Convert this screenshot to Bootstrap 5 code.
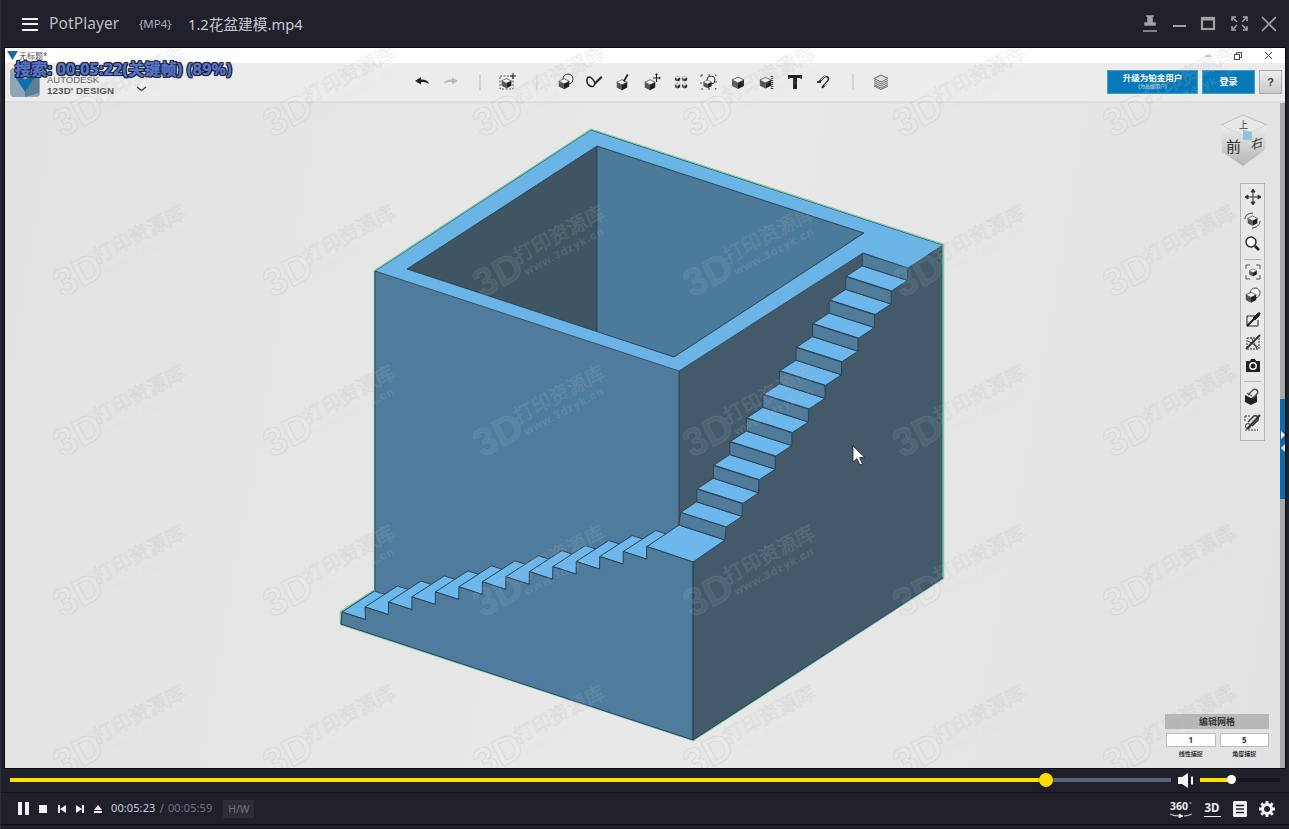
<!DOCTYPE html>
<html lang="zh">
<head>
<meta charset="utf-8">
<title>PotPlayer</title>
<link href="https://cdn.jsdelivr.net/npm/bootstrap@5.3.0/dist/css/bootstrap.min.css" rel="stylesheet">
<style>
html,body{margin:0;height:100%;overflow:hidden;background:#1f2029}
body{font-family:"Noto Sans","Noto Sans CJK SC",sans-serif}
.pp-shell{width:1289px;height:829px;background:#1f2029;border-left:1px solid #2c2d35}
.pp-head{height:48px;color:#b9bdc5}
.pp-burger{width:16px;height:13px;margin-left:21px;margin-right:11px;border-top:2px solid #f2f2f2;border-bottom:2px solid #f2f2f2;position:relative}
.pp-burger::after{content:"";position:absolute;left:0;right:0;top:3.5px;height:2px;background:#f2f2f2}
.pp-brand{font-size:15.5px;width:90px;letter-spacing:.1px}
.pp-fmt{font-size:11.5px;width:49px;color:#a8b0c0}
.pp-file{font-size:14.7px;color:#c3c9d4}
.pp-winbtns{margin-left:auto;margin-right:10px;gap:0}
.pp-winbtns svg{display:block}
.pp-video{height:720px;margin-left:4px;width:1280px;position:relative;background:#e4e4e4;overflow:hidden;outline:1px solid #0c0c10}
.app-title{height:15px;background:#fff;position:relative;font-size:8px;color:#555;line-height:15px;padding-left:2px}
.app-title span{margin-left:1px}
.app-winbtns{margin-left:auto;margin-right:12px;gap:22px}
.app-tools{height:40px;background:#ececec;border-bottom:2px solid #dcdcdc}
.app-logo{width:30px;height:29px;margin-left:5px;margin-right:7px;flex:none}
.app-brand{width:90px;line-height:11px;font-size:9.5px;color:#555;font-weight:700;font-family:"Liberation Sans",sans-serif;padding-top:5px;position:relative}
.app-brand b{display:block;font-size:9.8px;letter-spacing:.1px}
.app-brand i{display:block;font-style:normal;font-weight:400;color:#666}
.app-chev{position:absolute;left:89px;top:17px}
.app-iconrow{margin-left:271px;width:680px}
.app-ic{width:28.7px;height:20px;display:flex;justify-content:center;align-items:center;flex:none;position:relative}
.app-ic svg{display:block}
.app-upsell{width:91px;height:24px;background:#0a79b8;color:#fff;text-align:center;font-size:8.5px;font-weight:700;line-height:11px;padding-top:1px;border:1px solid #3d9ed2}
.app-upsell small{display:block;font-size:5px;line-height:7px;font-weight:400;color:#cfe6f4}
.app-login{width:53px;height:24px;background:#0a79b8;color:#fff;text-align:center;font-size:9px;font-weight:700;line-height:22px;margin-left:4px;border:1px solid #3d9ed2}
.app-help{width:23px;height:24px;margin-left:4px;margin-right:3px;border:1px solid #aaa;background:linear-gradient(#eee,#c9c9c9);text-align:center;font-size:11px;line-height:22px;color:#444;font-weight:700;font-family:"Liberation Sans",sans-serif}
.app-canvas{height:665px;position:relative;background:linear-gradient(100deg,#e2e2e2,#e8e8e8 50%,#e2e2e2)}
.model-svg{position:absolute;inset:0;width:1280px;height:665px}
.mark-svg{position:absolute;inset:0;width:1280px;height:720px;pointer-events:none}
.app-rail{position:absolute;left:1235px;top:80px;width:25px;height:258px;border:1.5px solid #b4b4b4;background:#e8e8e8;padding-top:1px}
.rail-ic{height:23.5px;display:flex;justify-content:center;align-items:center}
.rail-last{margin-top:3px}
.rail-sep{height:1px;width:17px;margin:3px auto .5px;background:#bbb}
.rail-sep2{margin:3px auto}
.app-scroll{position:absolute;right:0;top:0;bottom:0;width:5px;background:#a9a9a9}
.app-scroll::after{content:"";position:absolute;left:0;right:0;top:296px;height:100px;background:#0b6bb0}
.scroll-tip{position:absolute;width:0;height:0;border-top:4px solid transparent;border-bottom:4px solid transparent;z-index:2}
.grid-panel{position:absolute;left:1160px;top:611px;width:104px;font-size:7px;color:#333;text-align:center}
.grid-head{height:15px;background:#b7b7b7;font-size:9px;font-weight:700;line-height:15px;color:#333}
.grid-cells{gap:4px;margin:4px 0 0 1px}
.grid-cell{width:49.5px;height:14px;background:#fff;border:1px solid #bcbcbc;font-size:8px;line-height:12px;font-weight:700}
.grid-labs{gap:4px;margin:3px 0 0 1px;line-height:9px;font-size:6px;font-weight:700}
.grid-labs div{width:49.5px}
.osd{position:absolute;left:10px;top:11px;font-size:16px;line-height:20px;font-weight:700;color:#5675c9;-webkit-text-stroke:.4px #5675c9;text-shadow:-1px -1px 0 #14182a,1px -1px 0 #14182a,-1px 1px 0 #14182a,1px 1px 0 #14182a,0 1px 1px #14182a,0 -1px 1px #14182a,1px 0 1px #14182a,-1px 0 1px #14182a;white-space:nowrap;letter-spacing:.25px}
.pp-seek{height:25px;position:relative;border-bottom:1px solid #111217;padding-left:9px}
.seek-track{width:1161px;height:4px;background:#5f6478;position:relative;margin-top:-1px}
.seek-fill{height:100%;background:#ffe000}
.seek-knob{position:absolute;left:1029px;top:-5px;width:14px;height:14px;border-radius:50%;background:#ffdd00;box-shadow:0 1px 2px rgba(0,0,0,.5)}
.vol-ic{margin-left:7px;margin-right:6px;flex:none}
.vol-track{width:80px;height:4px;background:#16171e;position:relative;margin-top:-1px}
.vol-fill{height:100%;width:31px;background:#ffe000}
.vol-knob{position:absolute;left:27px;top:-2.5px;width:9px;height:9px;border-radius:50%;background:#fff}
.pp-ctrl{height:32px;padding-left:17px;border-bottom:1px solid #0d0d11}
.pp-ctrl svg{display:block;flex:none}
.ctl-stop{margin-left:10px}
.ctl-prev{margin-left:11px}
.ctl-next{margin-left:10px}
.ctl-eject{margin-left:10px}
.t-now{font-size:11px;color:#c3d0e4;margin-left:9px;letter-spacing:.1px}
.t-sep{font-size:12px;color:#6f7586;margin:0 4px}
.t-all{font-size:11px;color:#6f7586;letter-spacing:.1px}
.hw-chip{width:31px;height:18px;margin-left:11px;background:#2c2d36;color:#6e7282;font-size:10.5px;text-align:center;line-height:18px}
.ctrl-right{margin-left:auto;margin-right:14px}
.ctl-3d,.ctl-list{margin-left:11px}
.ctl-gear{margin-left:12px}
</style>
</head>
<body>
<svg width="0" height="0" class="position-absolute">
  <defs>
    <symbol id="cb" viewBox="0 0 16 16">
      <polygon points="8,3 14,6 8,9 2,6" fill="#f2f2f2" stroke="#222" stroke-width=".7"/>
      <polygon points="2,6 8,9 8,15 2,12" fill="#555"/>
      <polygon points="8,9 14,6 14,12 8,15" fill="#1f1f1f"/>
    </symbol>
  </defs>
</svg>
<div class="pp-shell d-flex flex-column">
  <header class="pp-head d-flex align-items-center">
    <div class="pp-burger"></div>
    <div class="pp-brand">PotPlayer</div>
    <div class="pp-fmt">{MP4}</div>
    <div class="pp-file">1.2花盆建模.mp4</div>
    <svg class="pp-winbtns" width="136" height="20" viewBox="0 0 136 20" fill="none" stroke="#a3a3a3" stroke-width="2">
      <path d="M3 2h8M5 2h4v7h3v2H2V9h3zM0 17h14" fill="#a3a3a3" stroke-width="1.5"/>
      <path d="M30 12h13"/>
      <rect x="59" y="4" width="12" height="11" stroke-width="2.2"/><path d="M58 5h14" stroke-width="3"/>
      <path d="M89 7V3h4M100 3h4v4M89 12v4h4M100 16h4v-4M90 4l4 4M103 4l-4 4M90 15l4-4M103 15l-4-4" stroke-width="1.5"/>
      <path d="M119 3l14 14M133 3l-14 14" stroke-width="1.7"/>
    </svg>
  </header>

  <main class="pp-video">
    <div class="app-title d-flex align-items-center">
      <svg width="11" height="9" viewBox="0 0 11 9"><polygon points="0,0 11,0 5.5,9" fill="#176aa8"/></svg>
      <span>无标题*</span>
      <div class="app-winbtns d-flex align-items-center">
        <svg width="8" height="8" viewBox="0 0 8 8"><path d="M1 4h6" stroke="#999"/></svg>
        <svg width="8" height="8" viewBox="0 0 8 8" fill="none" stroke="#444"><rect x=".5" y="2.5" width="5" height="5"/><path d="M2.5 2.500V.5h5v5h-2"/></svg>
        <svg width="9" height="9" viewBox="0 0 9 9"><path d="M1 1l7 7M8 1l-7 7" stroke="#444"/></svg>
      </div>
    </div>
    <div class="app-tools d-flex align-items-center">
      <svg class="app-logo" viewBox="0 0 30 29">
        <rect width="30" height="29" rx="4" fill="#8fa6b4"/>
        <polygon points="15,3 29,7 29,25 15,29" fill="#5b7f95"/>
        <polygon points="4,7 26,7 15,24" fill="#0f6fae"/>
        <polygon points="4,7 15,11 26,7 15,3" fill="#b4c4cc"/>
      </svg>
      <div class="app-brand">
        <i>AUTODESK</i><b>123D' DESIGN</b>
        <svg class="app-chev" width="11" height="6" viewBox="0 0 11 6"><path d="M1 1l4.500 3.500L10 1" fill="none" stroke="#444" stroke-width="1.500"/></svg>
      </div>
      <div class="app-iconrow d-flex align-items-center">
        <div class="app-ic"><svg width="16" height="12" viewBox="0 0 16 12"><path d="M1 5l6-4v2.500c4 0 7 1 8 4.500-2-1.500-4-2-8-2V8.500z" fill="#222"/></svg></div>
        <div class="app-ic"><svg width="16" height="12" viewBox="0 0 16 12"><path d="M15 5L9 1v2.500c-4 0-7 1-8 4.500 2-1.500 4-2 8-2v2.500z" fill="#bbb"/></svg></div>
        <div class="app-ic"><svg width="2" height="16"><path d="M1 0v16" stroke="#bbb"/></svg></div>
        <div class="app-ic"><svg width="18" height="18" viewBox="0 0 18 18"><rect x="1" y="3" width="13" height="13" fill="none" stroke="#555" stroke-dasharray="2 1.500"/><use href="#cb" x="1" y="3" width="13" height="13"/><path d="M14 0v6M11 3h6" stroke="#222"/></svg></div>
        <div class="app-ic"><svg width="2" height="16"><path d="M1 0v16" stroke="#ccc"/></svg></div>
        <div class="app-ic"><svg width="18" height="18" viewBox="0 0 18 18"><circle cx="11" cy="6" r="5" fill="#f2f2f2" stroke="#333"/><use href="#cb" x="0" y="3" width="14" height="14"/></svg></div>
        <div class="app-ic"><svg width="18" height="16" viewBox="0 0 18 16"><path d="M4 3c-3 0-3 7 1 9s6-2 4-5-3-4-5-4z" fill="none" stroke="#222" stroke-width="1.500"/><path d="M9 9l7-7 1.500 1.500-7 7z" fill="#222"/></svg></div>
        <div class="app-ic"><svg width="18" height="18" viewBox="0 0 18 18"><use href="#cb" x="1" y="4" width="14" height="14"/><path d="M9 8l4-7 1.500 1-4 7z" fill="#222"/></svg></div>
        <div class="app-ic"><svg width="18" height="18" viewBox="0 0 18 18"><use href="#cb" x="0" y="4" width="14" height="14"/><path d="M10 5h7M13.500 1.500V9" stroke="#222"/><path d="M13.500 0l-1.500 2h3zM18 5l-2-1.500v3z" fill="#222"/></svg></div>
        <div class="app-ic"><svg width="14" height="14" viewBox="0 0 14 14"><use href="#cb" x="0" y="0" width="7" height="7"/><use href="#cb" x="7" y="0" width="7" height="7"/><use href="#cb" x="0" y="7" width="7" height="7"/><use href="#cb" x="7" y="7" width="7" height="7"/></svg></div>
        <div class="app-ic"><svg width="18" height="18" viewBox="0 0 18 18"><rect x="1" y="2" width="15" height="14" fill="none" stroke="#444" stroke-dasharray="2 5"/><circle cx="11" cy="7" r="4" fill="#f2f2f2" stroke="#333"/><use href="#cb" x="2" y="5" width="11" height="11"/></svg></div>
        <div class="app-ic"><svg width="16" height="16" viewBox="0 0 16 16"><use href="#cb" width="16" height="16"/></svg></div>
        <div class="app-ic"><svg width="16" height="16" viewBox="0 0 16 16"><use href="#cb" x="-1" y="0" width="15" height="16"/><path d="M13 2v13" stroke="#333" stroke-width="2.500" stroke-dasharray="1 1"/></svg></div>
        <div class="app-ic"><svg width="14" height="14" viewBox="0 0 14 14"><path d="M0 0h14v4h-1l-1-1H9v11H5V3H2L1 4H0z" fill="#222"/></svg></div>
        <div class="app-ic"><svg width="16" height="16" viewBox="0 0 16 16" fill="none"><path d="M3 8l5-5c3-2 6 1 4 4l-5 6" stroke="#333" stroke-width="2"/><path d="M5 6l4-4c4-2 6 2 4 5l-5 5" stroke="#f4f4f4"/><path d="M1 8l4 0M6 14l2-3" stroke="#111" stroke-width="1.500"/></svg></div>
        <div class="app-ic"><svg width="2" height="16"><path d="M1 0v16" stroke="#bbb"/></svg></div>
        <div class="app-ic"><svg width="16" height="16" viewBox="0 0 16 16" fill="none" stroke="#666"><polygon points="8,1 15,4.500 8,8 1,4.500" fill="#ddd"/><path d="M1 6.500l7 3.500 7-3.500M1 8.500l7 3.500 7-3.500M1 10.500l7 3.500 7-3.500M1 12l7 3.500 7-3.500"/></svg></div>
      </div>
      <div class="ms-auto d-flex align-items-center">
        <div class="app-upsell">升级为铂金用户<small>(为高级用户)</small></div>
        <div class="app-login">登录</div>
        <div class="app-help">?</div>
      </div>
    </div>
    <div class="app-canvas">
      <svg class="model-svg" id="model" viewBox="5 103 1280 665"></svg>
      <div class="app-rail">
        <div class="rail-ic"><svg width="16" height="16" viewBox="0 0 16 16" fill="none" stroke="#333"><path d="M8 1v14M1 8h14"/><path d="M8 0L6 3h4zM8 16l-2-3h4zM0 8l3-2v4zM16 8l-3-2v4z" fill="#333"/></svg></div>
        <div class="rail-ic"><svg width="17" height="17" viewBox="0 0 17 17"><use href="#cb" x="2" y="1" width="13" height="14"/><path d="M1 7c0-4 4-6 8-6M16 9c0 4-4 7-8 7" fill="none" stroke="#444"/></svg></div>
        <div class="rail-ic"><svg width="15" height="15" viewBox="0 0 15 15"><circle cx="6" cy="6" r="5" fill="#fff" stroke="#222" stroke-width="1.400"/><path d="M10 10l4 4" stroke="#222" stroke-width="2.500"/></svg></div>
        <div class="rail-sep"></div>
        <div class="rail-ic"><svg width="16" height="16" viewBox="0 0 16 16"><path d="M1 5V1h4M11 1h4v4M1 11v4h4M15 11v4h-4" fill="none" stroke="#555"/><use href="#cb" x="3" y="2" width="10" height="12"/></svg></div>
        <div class="rail-ic"><svg width="17" height="17" viewBox="0 0 17 17"><circle cx="11" cy="6" r="5" fill="#f2f2f2" stroke="#555"/><use href="#cb" x="0" y="2" width="14" height="15"/></svg></div>
        <div class="rail-ic"><svg width="16" height="16" viewBox="0 0 16 16" fill="none" stroke="#222"><path d="M2 5h8M2 5v10h11V9"/><path d="M2 15L15 2" stroke-width="2"/><path d="M8 7l5-5 2 0-1 3-4 4z" fill="#222"/></svg></div>
        <div class="rail-ic"><svg width="16" height="16" viewBox="0 0 16 16" fill="none" stroke="#333"><path d="M2 4h12v11H2z" stroke-dasharray="2 1"/><path d="M1 15L15 1" stroke-width="2"/><path d="M3 7l10 6M6 3l6 12"/></svg></div>
        <div class="rail-ic"><svg width="14" height="13" viewBox="0 0 14 13"><path d="M0 2h4l1-2h4l1 2h4v11H0z" fill="#222"/><circle cx="7" cy="7" r="3.200" fill="none" stroke="#fff" stroke-width="1.400"/></svg></div>
        <div class="rail-sep rail-sep2"></div>
        <div class="rail-ic"><svg width="17" height="17" viewBox="0 0 17 17"><path d="M1 7l6 3 6-3v7l-6 3-6-3z" fill="#222"/><path d="M4 7l5-5c3-2 6 1 4 4l-4 4" fill="none" stroke="#555" stroke-width="1.500"/><path d="M3 5l5 3" stroke="#444"/></svg></div>
        <div class="rail-ic rail-last"><svg width="17" height="17" viewBox="0 0 17 17" fill="none" stroke="#333"><path d="M1 2h5M1 2v5M1 16h13" stroke-dasharray="2 1"/><path d="M3 15L16 1" stroke-width="2"/><path d="M4 8l6-6c3-1 5 1 4 4l-6 6" stroke-width="1.500"/><circle cx="4" cy="12" r="2.500"/></svg></div>
      </div>
      <div class="grid-panel">
        <div class="grid-head">编辑网格</div>
        <div class="grid-cells d-flex"><div class="grid-cell">1</div><div class="grid-cell">5</div></div>
        <div class="grid-labs d-flex"><div>线性捕捉</div><div>角度捕捉</div></div>
      </div>
      <div class="app-scroll"></div>
      <div class="scroll-tip" style="right:0;top:328px;border-left:4px solid #fff"></div>
      <div class="scroll-tip" style="right:0;top:341px;border-right:4px solid #d5e7f4"></div>
    </div>
    <svg class="mark-svg" id="marks" viewBox="5 48 1280 720"></svg>
    <div class="osd">搜索: 00:05:22(关键帧) (89%)</div>
  </main>

  <section class="pp-seek d-flex align-items-center">
    <div class="seek-track"><div class="seek-fill" style="width:1036px"></div><div class="seek-knob"></div></div>
    <svg class="vol-ic" width="16" height="15" viewBox="0 0 16 15"><path d="M0 4h4l6-4v15l-6-4H0z" fill="#f4f4f4"/><path d="M14 3.500v8" stroke="#f4f4f4" stroke-width="2"/></svg>
    <div class="vol-track"><div class="vol-fill"></div><div class="vol-knob"></div></div>
  </section>

  <section class="pp-ctrl d-flex align-items-center">
    <svg width="11" height="13" viewBox="0 0 11 13"><path d="M0 0h4v13H0zM7 0h4v13H7z" fill="#f1f1f4"/></svg>
    <svg class="ctl-stop" width="8" height="8" viewBox="0 0 8 8"><rect width="8" height="8" fill="#f1f1f4"/></svg>
    <svg class="ctl-prev" width="8" height="8" viewBox="0 0 8 8"><path d="M0 0h2v8H0zM8 0v8L2 4z" fill="#f1f1f4"/></svg>
    <svg class="ctl-next" width="8" height="8" viewBox="0 0 8 8"><path d="M8 0H6v8h2zM0 0v8l6-4z" fill="#f1f1f4"/></svg>
    <svg class="ctl-eject" width="8" height="8" viewBox="0 0 8 8"><path d="M4 0l4 5H0zM0 6h8v2H0z" fill="#f1f1f4"/></svg>
    <span class="t-now">00:05:23</span><span class="t-sep">/</span><span class="t-all">00:05:59</span>
    <div class="hw-chip">H/W</div>
    <div class="ctrl-right d-flex align-items-center">
      <svg width="23" height="18" viewBox="0 0 23 18"><text x="0" y="10" font-family="Noto Sans" font-size="10.500" font-weight="700" fill="#eee">360</text><text x="19" y="6" font-size="6" fill="#eee">°</text><path d="M0 14c3 1.500 6 2 9 2M22 14c-3 1.500-6 2-8 2M9 14v4l4-2z" stroke="#eee" fill="#eee" stroke-width=".8"/></svg>
      <svg class="ctl-3d" width="18" height="18" viewBox="0 0 18 18"><text x="0.500" y="12" font-family="Noto Sans" font-size="11.500" font-weight="700" fill="#eee">3D</text><path d="M0 16.500h17" stroke="#eee"/></svg>
      <svg class="ctl-list" width="14" height="16" viewBox="0 0 14 16"><rect width="14" height="16" rx="1.500" fill="#f2f2f2"/><path d="M3 4.500h8M3 8h8M3 11.500h8" stroke="#1f2029" stroke-width="1.500"/></svg>
      <svg class="ctl-gear" width="16" height="16" viewBox="0 0 16 16"><circle cx="8" cy="8" r="4.500" fill="none" stroke="#f2f2f2" stroke-width="3"/><path d="M8 0v3M8 13v3M0 8h3M13 8h3M2.300 2.300l2.100 2.100M11.600 11.600l2.100 2.100M13.700 2.300l-2.100 2.100M4.400 11.600l-2.100 2.100" stroke="#f2f2f2" stroke-width="2.800"/></svg>
    </div>
  </section>
</div>
<script>
(function(){
  var EDGE='#2c4254',TOP='#6ab4e6',TREAD='#6cb7ec',LEFT='#4f7c9d',RIGHT='#435a6b',IN='#3f5564',BACK='#4c7a9a',RISER='#507b9b';
  function p(pts,fill,sw){return '<polygon points="'+pts.map(function(a){return a[0].toFixed(1)+','+a[1].toFixed(1)}).join(' ')+'" fill="'+fill+'" stroke="'+EDGE+'" stroke-width="'+(sw==null?1:sw)+'" stroke-linejoin="round"/>';}
  var s='';
  s+='<defs><linearGradient id="vc" x1="0" y1="0" x2="0" y2="1"><stop offset="0" stop-color="#ededed"/><stop offset="1" stop-color="#b5b5b5"/></linearGradient></defs>';
  s+='<polygon points="375,271 591,130 943,245 943,578 693,740 341,624 341,612 375,590" fill="none" stroke="#7cc9a6" stroke-width="2.500"/>';
  var L=[[342,612]],i;
  for(i=0;i<13;i++)L.push([365+23.47*i,607-5.05*i]);
  var RX=function(q){return [q[0]+23.4,q[1]+7.6]};
  var b=[32.5,-21];
  s+=p([[679,371],[863,253],[908,268],[943,245],[943,578],[693,740],[693,562],[679,525]],RIGHT,0);
  s+=p([[375,271],[679,371],[679,525],[647,560],[375,610]],LEFT,0);
  for(i=0;i<13;i++){var a=L[i],r=RX(a);s+=p([a,r,[r[0]+b[0],r[1]+b[1]],[a[0]+b[0],a[1]+b[1]]],TREAD,1);}
  s+=p([[647,546.500],[679,525],[725,540],[693,562]],TREAD,1);
  var f=[];for(i=0;i<13;i++){f.push(L[i]);f.push(RX(L[i]));}
  f.push(L[13]);f.push([693,562]);f.push([693,740]);f.push([341,624]);
  s+=p(f,LEFT,1);
  var P=[],w=[45.5,14.6],d=[16,-10.5],h=12.8;
  for(i=0;i<12;i++)P.push([680.7+16.55*i,512.3-23.6*i]);
  s+=p([[679,525],[725,540],[726,527],[680.700,512.300]],RISER,1);
  for(i=0;i<11;i++){
    var q=P[i],qr=[q[0]+w[0],q[1]+w[1]],qd=[q[0]+d[0],q[1]+d[1]],qrd=[qr[0]+d[0],qr[1]+d[1]];
    s+=p([q,qr,qrd,qd],TREAD,1);
    s+=p([qd,qrd,[qrd[0],qrd[1]-h],[qd[0],qd[1]-h]],RISER,1);
  }
  s+=p([[407,269],[597,146],[597,332]],IN,.8);
  s+=p([[597,146],[864,233],[674,357],[597,332]],BACK,.8);
  s+='<path d="M375 271L591 130L943 245L908 268L863 253L679 371ZM407 269L674 357L864 233L597 146Z" fill="'+TOP+'" fill-rule="evenodd" stroke="'+EDGE+'" stroke-width=".9" stroke-linejoin="round"/>';
  s+='<path d="M375 271V590M679 371V525M693 562V740M693 740L943 578" stroke="'+EDGE+'" stroke-width="1" fill="none"/>';
  s+='<path d="M375 271L591 130L943 245V578" stroke="#7cc9a6" stroke-width="1.200" fill="none" transform="translate(0,-.8)"/>';
  s+='<path d="M853 446v16l4-3.500 3 6.500 2.500-1-3-6.300 5-.5z" fill="#fff" stroke="#1b1b1b" stroke-width=".8"/>';
  s+='<polygon points="1221,125 1243,115 1267,125 1243,136" fill="#e7e7e7" stroke="#999" stroke-width=".5"/>';
  s+='<polygon points="1221,125 1243,136 1243,166 1222,152" fill="url(#vc)"/>';
  s+='<polygon points="1243,136 1267,125 1265,150 1243,166" fill="url(#vc)"/>';
  s+='<polygon points="1243,130 1252,132 1252,140 1243,140" fill="#8fc4de"/>';
  s+='<text x="1226" y="152" font-family="Noto Sans CJK SC" font-size="15" fill="#333">前</text>';
  s+='<text x="1251" y="150" font-family="Noto Sans CJK SC" font-size="12" fill="#333" transform="skewY(-20) translate(0,455)">右</text>';
  s+='<text x="1239" y="128" font-family="Noto Sans CJK SC" font-size="9" fill="#444">上</text>';
  document.getElementById('model').innerHTML=s;
  var m='',cols=[62,272,482,692,902,1112],rows=[138,298,458,618,778],c,r;
  for(r=0;r<rows.length;r++)for(c=0;c<cols.length;c++){
    m+='<g transform="translate('+cols[c]+','+rows[r]+') rotate(-28)">'+
    '<text x="0" y="0" font-family="Liberation Sans" font-weight="700" font-size="39" fill="rgba(255,255,255,.08)" stroke="rgba(150,160,170,.24)" stroke-width=".9">3D</text>'+
    '<text x="48" y="-13" font-family="Noto Sans CJK SC" font-size="20" fill="rgba(255,255,255,.08)" stroke="rgba(150,160,170,.24)" stroke-width=".6">打印资源库</text>'+
    '<text x="50" y="1" font-family="Liberation Sans" font-weight="700" font-size="11.500" letter-spacing=".9" fill="rgba(255,255,255,.1)" stroke="rgba(150,160,170,.16)" stroke-width=".3">www.3dzyk.cn</text></g>';
  }
  document.getElementById('marks').innerHTML=m;
})();
</script>
<script src="https://cdn.jsdelivr.net/npm/bootstrap@5.3.0/dist/js/bootstrap.bundle.min.js"></script>
</body>
</html>
